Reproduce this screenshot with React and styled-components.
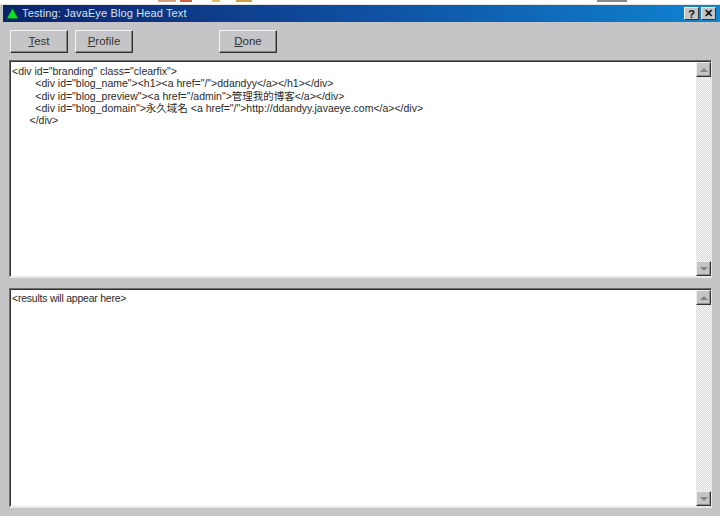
import styled, { createGlobalStyle } from "styled-components"

const GlobalStyle = createGlobalStyle`
  html, body {
    margin: 0;
    padding: 0;
    background: #fff;
  }
`

const Page = styled.div`
  width: 720px;
  height: 516px;
  overflow: hidden;
  font-family: "Liberation Sans", Arial, "Noto Sans CJK JP", sans-serif;
  font-size: 11px;
  color: #222;
`

const Behind = styled.div`
  height: 4px;
  display: flex;
  background: #fff;
`

const Speck = styled.div`
  height: 2px;
  width: ${(p) => p.$w}px;
  margin-left: ${(p) => p.$gap}px;
  background: ${(p) => p.$color};
`

const Dialog = styled.div`
  height: 512px;
  box-sizing: border-box;
  padding: 0 0 0 3px;
  background: #c5c4c6;
  border-top: 1px solid #e4e4e4;
  display: flex;
  flex-direction: column;
`

const TitleBar = styled.div`
  height: 17px;
  flex: none;
  display: flex;
  align-items: center;
  padding: 0 4px 0 3px;
  background: linear-gradient(90deg, #0a246a 0%, #0f4fa0 50%, #1084d0 100%);
`

const Title = styled.div`
  flex: 1;
  margin-left: 3px;
  padding-bottom: 1px;
  color: #dfe1ee;
  font-size: 11px;
  letter-spacing: 0.13px;
  white-space: nowrap;
`

const CaptionButton = styled.div`
  width: 15px;
  height: 13px;
  margin-left: 2px;
  box-sizing: border-box;
  display: flex;
  align-items: center;
  justify-content: center;
  background: #c5c4c6;
  border: 1px solid;
  border-color: #f0f0f0 #333 #333 #f0f0f0;
  font-weight: bold;
  font-size: 11px;
  color: #111;
`

const Toolbar = styled.div`
  flex: none;
  display: flex;
  padding: 8px 0 0 7px;
  height: 23px;
`

const Button = styled.div`
  width: 58px;
  height: 23px;
  box-sizing: border-box;
  padding-bottom: 2px;
  margin-right: ${(p) => p.$after || 7}px;
  display: flex;
  align-items: center;
  justify-content: center;
  border: 1px solid;
  border-color: #f4f4f4 #2e2e2e #2e2e2e #f4f4f4;
  box-shadow: inset -1px -1px 0 #858285;
  font-size: 11.5px;
  color: #333;

  u {
    text-underline-offset: 1px;
  }
`

const Panes = styled.div`
  flex: 1;
  display: flex;
  flex-direction: column;
  gap: 10px;
  padding: 7px 8px 8px 6px;
  min-height: 0;
`

const Pane = styled.div`
  ${(p) => (p.$height ? `height: ${p.$height}px; flex: none;` : "flex: 1;")}
  box-sizing: border-box;
  display: flex;
  min-height: 0;
  border: 1px solid;
  border-width: 1px 1px 2px 1px;
  border-color: #6f6d6f #e8e8e8 #e8e8e8 #6f6d6f;
  box-shadow: inset 1px 1px 0 #333;
  padding: 2px 0 0 2px;
  background: #fff;
`

const Code = styled.pre`
  flex: 1;
  margin: 0;
  padding-top: ${(p) => p.$top}px;
  font-family: inherit;
  font-size: 10.5px;
  letter-spacing: ${(p) => p.$spacing || 0}px;
  line-height: 12.3px;
  tab-size: 8;
  color: #2a2a2a;
`

const Scrollbar = styled.div`
  flex: none;
  width: 15px;
  display: flex;
  flex-direction: column;
  justify-content: space-between;
  margin-top: -1px;
  background-color: #e6e6e6;
  background-image: repeating-conic-gradient(#dadada 0 25%, #f6f6f6 0 50%);
  background-size: 2px 2px;
`

const ArrowButton = styled.div`
  height: 15px;
  box-sizing: border-box;
  display: flex;
  align-items: center;
  justify-content: center;
  background: #c5c4c6;
  border: 1px solid;
  border-color: #eee #333 #333 #eee;
  box-shadow: inset -1px -1px 0 #939193;
`

const Arrow = styled.div`
  width: 0;
  height: 0;
  border-left: 4px solid transparent;
  border-right: 4px solid transparent;
  ${(p) => (p.$down ? "border-top: 4px solid #858385;" : "border-bottom: 4px solid #858385;")}
`

const specks = [
  { w: 18, gap: 158, color: "#d8a080" },
  { w: 12, gap: 4, color: "#d06040" },
  { w: 8, gap: 20, color: "#e0c060" },
  { w: 16, gap: 16, color: "#d0a050" },
  { w: 30, gap: 345, color: "#888" },
]

const source = `<div id="branding" class="clearfix">
	<div id="blog_name"><h1><a href="/">ddandyy</a></h1></div>
	<div id="blog_preview"><a href="/admin">管理我的博客</a></div>
	<div id="blog_domain">永久域名 <a href="/">http://ddandyy.javaeye.com</a></div>
      </div>`

const ScrollColumn = () => (
  <Scrollbar>
    <ArrowButton><Arrow /></ArrowButton>
    <ArrowButton><Arrow $down /></ArrowButton>
  </Scrollbar>
)

const App = () => {
  return (
    <Page>
      <GlobalStyle />
      <Behind>
        {specks.map((s, i) => (
          <Speck key={i} $w={s.w} $gap={s.gap} $color={s.color} />
        ))}
      </Behind>
      <Dialog>
        <TitleBar>
          <svg width="13" height="13" viewBox="0 0 14 13">
            <path d="M7 1 L13 12 L1 12 Z" fill="#10e020" stroke="#063" strokeWidth="0.6" />
          </svg>
          <Title>Testing: JavaEye Blog Head Text</Title>
          <CaptionButton>?</CaptionButton>
          <CaptionButton>✕</CaptionButton>
        </TitleBar>
        <Toolbar>
          <Button><span><u>T</u>est</span></Button>
          <Button $after={86}><span><u>P</u>rofile</span></Button>
          <Button><span><u>D</u>one</span></Button>
        </Toolbar>
        <Panes>
          <Pane $height={218}>
            <Code $top={2}>{source}</Code>
            <ScrollColumn />
          </Pane>
          <Pane>
            <Code $top={1} $spacing={-0.23}>{"<results will appear here>"}</Code>
            <ScrollColumn />
          </Pane>
        </Panes>
      </Dialog>
    </Page>
  )
}

export default App
